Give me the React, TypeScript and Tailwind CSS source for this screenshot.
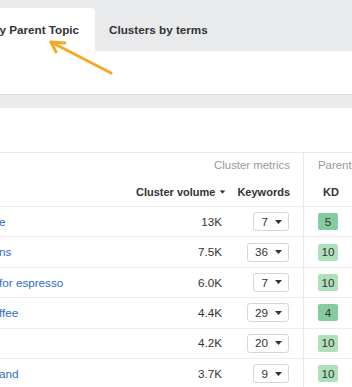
import React from "react";

const rows = [
  { name: "e", vol: "13K", kw: "7", kd: "5", dark: true },
  { name: "ns", vol: "7.5K", kw: "36", kd: "10", dark: false },
  { name: "for espresso", vol: "6.0K", kw: "7", kd: "10", dark: false },
  { name: "ffee", vol: "4.4K", kw: "29", kd: "4", dark: true },
  { name: "", vol: "4.2K", kw: "20", kd: "10", dark: false },
  { name: "and", vol: "3.7K", kw: "9", kd: "10", dark: false },
];

function Caret({ className = "" }: { className?: string }) {
  return (
    <svg width="7" height="4" viewBox="0 0 7 4" className={className}>
      <path d="M0 0 L7 0 L3.5 4 Z" fill="#333" />
    </svg>
  );
}

export default function App() {
  return (
    <div
      className="relative w-[352px] h-[387px] overflow-hidden bg-white text-[#333]"
      style={{ fontFamily: '"Liberation Sans", Arial, sans-serif' }}
    >
      {/* Tabs bar */}
      <div className="flex h-[51px] items-end bg-[#e9eaec]">
        <div className="-ml-[9px] flex h-[43px] w-[104px] items-center rounded-tr-[4px] bg-white text-[11.7px] font-bold">
          By Parent Topic
        </div>
        <div className="flex h-[43px] items-center pl-[14px] text-[11.7px] font-bold">
          Clusters by terms
        </div>
      </div>
      <div className="h-[43px] bg-white" />
      <div className="h-[14px] border-t border-[#dcdde0] bg-[#eaebed]" />
      <div className="h-[44px] bg-white" />

      {/* Table */}
      <div className="border-t border-[#e8e8e8]">
        {/* Header */}
        <div className="flex h-[54px] border-b border-[#ededed]">
          <div className="flex-1 flex flex-col">
            <div className="flex h-[25px] items-end justify-end pr-[13px] pb-[3px] text-[11.4px] text-[#999]">
              Cluster metrics
            </div>
            <div className="flex h-[29px] items-center justify-end pr-[13px] text-[11px] font-bold">
              <span className="flex items-center">
                Cluster volume
                <Caret className="ml-[4px] scale-[0.85]" />
              </span>
              <span className="ml-[11px]">Keywords</span>
            </div>
          </div>
          <div className="w-[49px] shrink-0 border-l border-[#e8e8e8] flex flex-col">
            <div className="flex h-[25px] items-end pl-[14px] pb-[3px] text-[11.4px] text-[#999] whitespace-nowrap">
              Parent
            </div>
            <div className="flex h-[29px] items-center pl-[19px] text-[11px] font-bold">KD</div>
          </div>
        </div>

        {rows.map((r, i) => (
          <div key={i} className="flex h-[30.4px] border-b border-[#ededed] text-[11.7px]">
            <div className="flex-1 min-w-0 flex items-center -ml-[1px] text-[#2f6cc4] whitespace-nowrap">
              {r.name}
            </div>
            <div className="w-[80px] shrink-0 flex items-center justify-end">{r.vol}</div>
            <div className="w-[81px] shrink-0 flex items-center justify-end pr-[14px]">
              <div className="flex h-[19px] items-center rounded-[3px] border border-[#d6d6d6] bg-white pl-[7px] pr-[6px]">
                <span>{r.kw}</span>
                <Caret className="ml-[7px]" />
              </div>
            </div>
            <div className="w-[49px] shrink-0 border-l border-[#e8e8e8] flex items-center pl-[14px]">
              <div
                className={
                  "flex h-[17px] w-[20px] items-center justify-center rounded-[2px] " +
                  (r.dark ? "bg-[#84cc9f]" : "bg-[#ade0bb]")
                }
              >
                {r.kd}
              </div>
            </div>
          </div>
        ))}
      </div>

      {/* Arrow annotation */}
      <svg
        className="absolute left-0 top-0 pointer-events-none"
        width="352"
        height="387"
        viewBox="0 0 352 387"
      >
        <g stroke="#f7a823" strokeWidth="3" strokeLinecap="round" strokeLinejoin="round" fill="none">
          <line x1="111" y1="73" x2="51" y2="42" />
          <polyline points="65,43 51,42 56,52" />
        </g>
      </svg>
    </div>
  );
}
